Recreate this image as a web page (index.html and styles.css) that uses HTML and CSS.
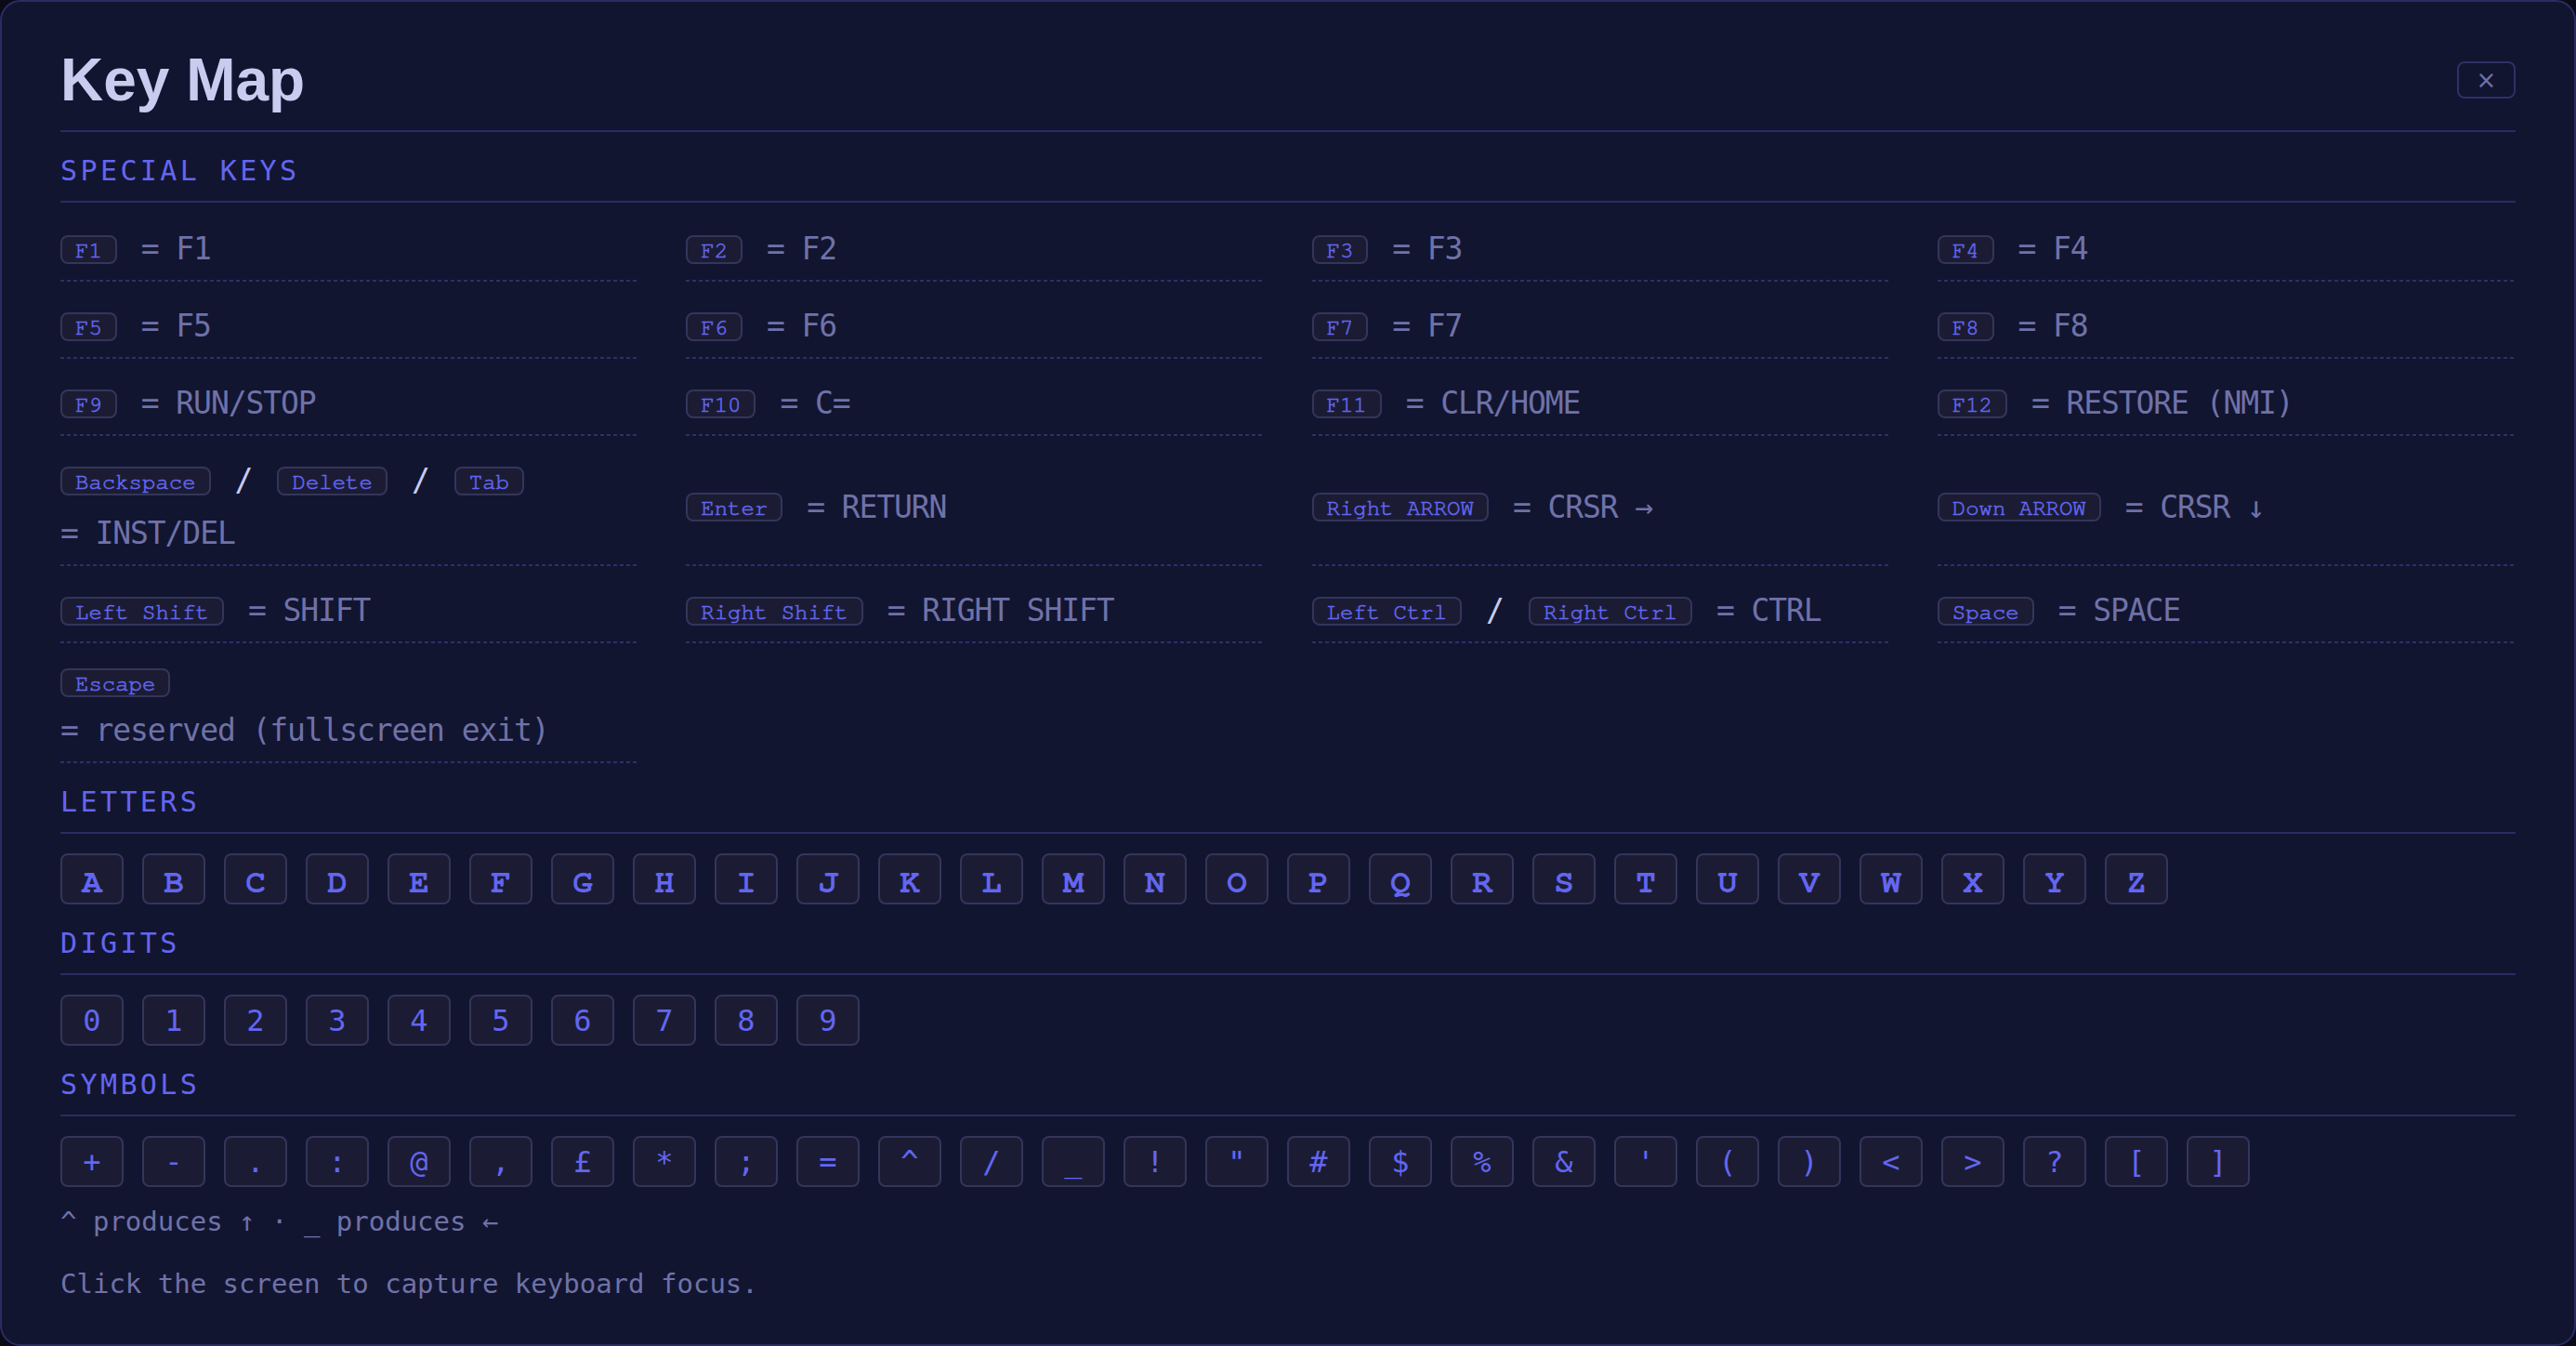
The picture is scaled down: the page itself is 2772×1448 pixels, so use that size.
FILE: index.html
```html
<!DOCTYPE html>
<html>
<head>
    <title>Key Map</title>
    <link rel="stylesheet" href="styles.css">
</head>
<body>
    <div class="panel">
        <div class="header">
            <h1>Key Map</h1>
            <button class="close">&times;</button>
        </div>

        <h2>Special Keys</h2>
        <div class="special-grid">
            <div class="item"><kbd>F1</kbd><span class="val">= F1</span></div>
            <div class="item"><kbd>F2</kbd><span class="val">= F2</span></div>
            <div class="item"><kbd>F3</kbd><span class="val">= F3</span></div>
            <div class="item"><kbd>F4</kbd><span class="val">= F4</span></div>

            <div class="item"><kbd>F5</kbd><span class="val">= F5</span></div>
            <div class="item"><kbd>F6</kbd><span class="val">= F6</span></div>
            <div class="item"><kbd>F7</kbd><span class="val">= F7</span></div>
            <div class="item"><kbd>F8</kbd><span class="val">= F8</span></div>

            <div class="item"><kbd>F9</kbd><span class="val">= RUN/STOP</span></div>
            <div class="item"><kbd>F10</kbd><span class="val">= C=</span></div>
            <div class="item"><kbd>F11</kbd><span class="val">= CLR/HOME</span></div>
            <div class="item"><kbd>F12</kbd><span class="val">= RESTORE (NMI)</span></div>

            <div class="item"><kbd>Backspace</kbd><span class="sep">/</span><kbd>Delete</kbd><span class="sep">/</span><kbd>Tab</kbd><span class="val">= INST/DEL</span></div>
            <div class="item"><kbd>Enter</kbd><span class="val">= RETURN</span></div>
            <div class="item"><kbd>Right ARROW</kbd><span class="val">= CRSR →</span></div>
            <div class="item"><kbd>Down ARROW</kbd><span class="val">= CRSR ↓</span></div>

            <div class="item"><kbd>Left Shift</kbd><span class="val">= SHIFT</span></div>
            <div class="item"><kbd>Right Shift</kbd><span class="val">= RIGHT SHIFT</span></div>
            <div class="item"><kbd>Left Ctrl</kbd><span class="sep">/</span><kbd>Right Ctrl</kbd><span class="val">= CTRL</span></div>
            <div class="item"><kbd>Space</kbd><span class="val">= SPACE</span></div>

            <div class="item"><kbd>Escape</kbd><span class="val">= reserved (fullscreen exit)</span></div>
        </div>

        <h2>Letters</h2>
        <div class="keys letters">
            <span class="key">A</span><span class="key">B</span><span class="key">C</span><span class="key">D</span><span class="key">E</span><span class="key">F</span><span class="key">G</span><span class="key">H</span><span class="key">I</span><span class="key">J</span><span class="key">K</span><span class="key">L</span><span class="key">M</span><span class="key">N</span><span class="key">O</span><span class="key">P</span><span class="key">Q</span><span class="key">R</span><span class="key">S</span><span class="key">T</span><span class="key">U</span><span class="key">V</span><span class="key">W</span><span class="key">X</span><span class="key">Y</span><span class="key">Z</span>
        </div>

        <h2>Digits</h2>
        <div class="keys plain">
            <span class="key">0</span><span class="key">1</span><span class="key">2</span><span class="key">3</span><span class="key">4</span><span class="key">5</span><span class="key">6</span><span class="key">7</span><span class="key">8</span><span class="key">9</span>
        </div>

        <h2>Symbols</h2>
        <div class="keys plain">
            <span class="key">+</span><span class="key">-</span><span class="key">.</span><span class="key">:</span><span class="key">@</span><span class="key">,</span><span class="key">£</span><span class="key">*</span><span class="key">;</span><span class="key">=</span><span class="key">^</span><span class="key">/</span><span class="key">_</span><span class="key">!</span><span class="key">"</span><span class="key">#</span><span class="key">$</span><span class="key">%</span><span class="key">&amp;</span><span class="key">'</span><span class="key">(</span><span class="key">)</span><span class="key">&lt;</span><span class="key">&gt;</span><span class="key">?</span><span class="key">[</span><span class="key">]</span>
        </div>

        <p class="note">^ produces ↑ · _ produces ←</p>
        <p class="hint">Click the screen to capture keyboard focus.</p>
    </div>
</body>
</html>
```

FILE: styles.css
```css
* { box-sizing: border-box; }
html, body { margin: 0; height: 100%; }
body { background: #0a0b17; font-family: "DejaVu Sans Mono", monospace; }

.panel { height: 100vh; background: #121530; border: 2px solid #2a2c63; border-radius: 22px; padding: 52px 63px 0; }

.header { display: flex; align-items: center; justify-content: space-between; padding-bottom: 22px; border-bottom: 2px solid #2a2c63; }
h1 { margin: 0; font-family: "Liberation Sans", Arial, sans-serif; font-size: 64px; line-height: 64px; font-weight: bold; color: #c8ccef; }
.close { width: 63px; height: 40px; background: transparent; border: 2px solid #2e3068; border-radius: 8px; color: #6f72a8; font-family: "DejaVu Sans", sans-serif; font-size: 26px; line-height: 1; padding: 0; cursor: pointer; }

h2 { margin: 24px 0 21px; padding-bottom: 14px; border-bottom: 2px solid #2a2c63; font-size: 30px; line-height: 36px; font-weight: normal; letter-spacing: 3.4px; text-transform: uppercase; color: #6366f1; }

.special-grid { display: grid; grid-template-columns: repeat(4, 1fr); column-gap: 51px; row-gap: 19px; }
.item { display: flex; flex-wrap: wrap; align-items: center; align-content: center; column-gap: 26px; row-gap: 15px; padding: 8px 0 14px; background: repeating-linear-gradient(90deg, #2e3068 0 4px, transparent 4px 7px) left bottom / 100% 2px no-repeat; }

kbd { display: inline-block; padding: 0 14px; line-height: 27px; border: 2px solid #33355a; border-radius: 8px; background: #1b1c33; color: #6366f1; font-family: "Nimbus Mono L", "TeX Gyre Cursor", "Courier 10 Pitch", "Courier Prime", "Liberation Mono", monospace; font-size: 24px; -webkit-text-stroke: 0.6px #6366f1; }
.val { font-size: 33px; line-height: 42px; letter-spacing: -1.1px; color: #6f72a8; white-space: nowrap; }
.sep { font-size: 33px; line-height: 42px; color: #c8ccef; }

.keys { display: flex; flex-wrap: wrap; gap: 20px; }
.key { width: 68px; height: 55px; display: flex; align-items: center; justify-content: center; border: 2px solid #33355a; border-radius: 8px; background: #1b1c33; color: #6366f1; font-size: 32px; }
.letters .key { font-family: "Nimbus Mono L", "TeX Gyre Cursor", "Courier 10 Pitch", "Courier Prime", "Liberation Mono", monospace; font-weight: bold; font-size: 36px; }

.note { margin: 19px 0 0; font-size: 29px; line-height: 36px; color: #6f72a8; }
.hint { margin: 31px 0 0; font-size: 29px; line-height: 36px; color: #6f72a8; }
```
